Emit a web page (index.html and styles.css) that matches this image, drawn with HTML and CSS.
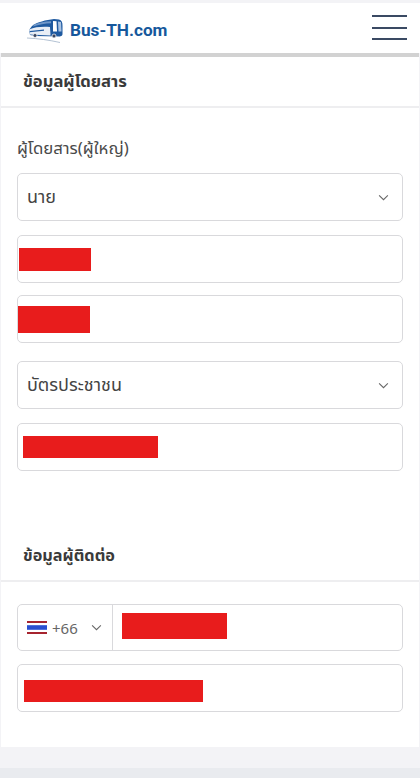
FILE: index.html
```html
<!DOCTYPE html>
<html lang="th">
<head>
<meta charset="utf-8">
<title>Bus-TH.com</title>
<link rel="stylesheet" href="styles.css">
</head>
<body>
<header class="topbar">
  <div class="brand">
    <svg class="bus" viewBox="0 0 36 24" aria-hidden="true">
      <path d="M5 7 C10 3 19 1 27 0 L32 .5 C34.500 1 35.500 3 35.500 7 L35.500 15 C35.500 16.500 34.500 17 33 17.500 L8 17 L3 16 L2 11 Z" fill="#1f5aa0"/>
      <path d="M2 10.500 C8 8 15 7.500 23 8 L23.500 16.500 L3 15.500 Z" fill="#e8eef6"/>
      <path d="M7 5.500 C12 3.500 18 2.500 24 2.200 L24 4.200 C18 4.500 12 5.500 6 7.500 Z" fill="#6f97c9"/>
      <path d="M3 12 L17 10.500 L17 11.800 L2.500 13.300 Z" fill="#1f5aa0"/>
      <path d="M26 2 L29.500 2.300 L30 12.500 L26 12.500 Z" fill="#fff"/>
      <path d="M31 2.500 L34 3 L34.500 12.500 L31.500 12.500 Z" fill="#a9c3e3"/>
      <circle cx="8" cy="16.500" r="2" fill="#3a4660" stroke="#fff" stroke-width=".7"/>
      <circle cx="27" cy="17" r="2" fill="#3a4660" stroke="#fff" stroke-width=".7"/>
      <path d="M0 19 C11 19.500 22 21 33 23.500" stroke="#9fb2c8" stroke-width=".8" fill="none"/>
    </svg>
    <span class="brand-name">Bus-TH.com</span>
  </div>
  <div class="burger" aria-label="menu"><i></i><i></i><i></i></div>
</header>

<main class="sheet">
  <h2 class="section-title first">ข้อมูลผู้โดยสาร</h2>
  <section class="passenger">
    <p class="group-label">ผู้โดยสาร(ผู้ใหญ่)</p>
    <div class="field select">
      <span>นาย</span>
      <svg class="chev" viewBox="0 0 12 8"><path d="M1 1.500 L6 6.500 L11 1.500"/></svg>
    </div>
    <div class="field tight"><b class="mask m-first"></b></div>
    <div class="field wide"><b class="mask m-last"></b></div>
    <div class="field select">
      <span>บัตรประชาชน</span>
      <svg class="chev" viewBox="0 0 12 8"><path d="M1 1.500 L6 6.500 L11 1.500"/></svg>
    </div>
    <div class="field"><b class="mask m-id"></b></div>
  </section>

  <h2 class="section-title second">ข้อมูลผู้ติดต่อ</h2>
  <section class="contact">
    <div class="field phone">
      <div class="dial">
        <svg class="flag" viewBox="0 0 20 13" aria-hidden="true">
          <rect width="20" height="13" fill="#fff"/>
          <rect width="20" height="2" fill="#a6242f"/>
          <rect y="4.200" width="20" height="4.600" fill="#2a4fd0"/>
          <rect y="11" width="20" height="2" fill="#a6242f"/>
        </svg>
        <span class="code">+66</span>
        <svg class="chev" viewBox="0 0 12 8"><path d="M1 1.500 L6 6.500 L11 1.500"/></svg>
      </div>
      <b class="mask m-phone"></b>
    </div>
    <div class="field"><b class="mask m-mail"></b></div>
  </section>
</main>
<div class="gap"></div>
<div class="footer-strip"></div>
</body>
</html>
```
FILE: styles.css
```css
* { box-sizing: border-box; }
html, body { margin: 0; height: 100%; }
body {
  background: #f3f3f6;
  font-family: "Noto Sans", "Noto Sans Thai", "DejaVu Sans", sans-serif;
  color: #3d3d3d;
  padding-top: 3px;
  overflow: hidden;
}
.topbar {
  height: 50px;
  background: #fff;
  display: flex;
  align-items: center;
  justify-content: space-between;
  padding: 0 13px 0 27px;
}
.brand { display: flex; align-items: center; gap: 7px; margin-top: 4px; }
.bus { width: 36px; height: 24px; display: block; margin-top: 2px; }
.brand-name {
  font-family: Roboto, "Liberation Sans", sans-serif;
  font-weight: 700;
  font-size: 17.200px;
  color: #16589c;
}
.burger { width: 35px; display: flex; flex-direction: column; gap: 9.500px; margin-top: -1px; }
.burger i { display: block; height: 2px; background: #3a4a63; }
.sheet {
  margin: 0 1px;
  background: #fff;
  height: 694px;
  border-top: 4px solid #d2d2d2;
}
.section-title {
  margin: 0;
  font-size: 16.600px;
  font-weight: 700;
  color: #3a3a3a;
  padding-left: 22px;
  border-bottom: 2px solid #eeeef0;
  display: flex;
  align-items: center;
}
.section-title.first { height: 51px; }
.section-title.second { height: 51px; margin-top: 46px; font-size: 16.300px; }
.passenger { padding: 27px 16.500px 0 16px; display: flex; flex-direction: column; }
.contact { padding: 22px 16.500px 0 16px; display: flex; flex-direction: column; gap: 13px; }
.group-label { margin: 0 0 13px; font-size: 16.800px; line-height: 25px; color: #4a4a4a; }
.field {
  height: 48px;
  border: 1px solid #d9d9dc;
  border-radius: 5px;
  background: #fff;
  position: relative;
  display: flex;
  align-items: center;
  font-size: 18px;
  color: #444;
  margin-bottom: 14px;
}
.field.tight { margin-bottom: 12px; }
.field.wide { margin-bottom: 18px; }
.contact .field { margin-bottom: 0; }
.contact .phone { height: 47px; }
.select { justify-content: space-between; padding: 0 13px 0 9px; }
.chev { width: 11px; height: 7px; fill: none; stroke: #666; stroke-width: 1.200; flex: none; }
.dial {
  width: 95px;
  height: 100%;
  border-right: 1.500px solid #d9d9dc;
  display: flex;
  align-items: center;
  padding-left: 9px;
  flex: none;
}
.flag { width: 20px; height: 13px; flex: none; }
.code { font-size: 15px; color: #666; margin-left: 5px; }
.dial .chev { margin-left: 13px; }
.mask { position: absolute; background: #e81c1c; display: block; }
.m-first { left: 1px; top: 12px; width: 72px; height: 23px; }
.m-last { left: 0; top: 10px; width: 72px; height: 27px; }
.m-id { left: 5px; top: 12px; width: 135px; height: 22px; }
.m-phone { left: 104px; top: 8px; width: 105px; height: 26px; }
.m-mail { left: 6px; top: 15px; width: 179px; height: 22px; }
.gap { height: 21px; }
.footer-strip { height: 10px; background: #e9ebef; }
```
